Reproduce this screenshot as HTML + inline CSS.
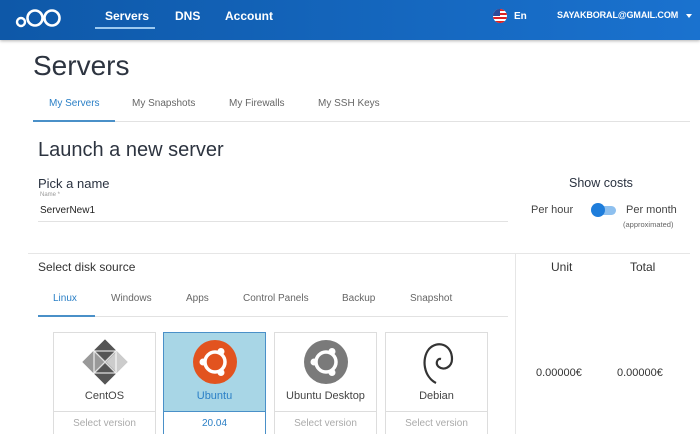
<!DOCTYPE html>
<html><head><meta charset="utf-8"><style>
*{margin:0;padding:0;box-sizing:border-box}
html,body{width:700px;height:434px;overflow:hidden}
body{background:#fff;font-family:"Liberation Sans",sans-serif;color:#2a3240;position:relative}
.a{position:absolute;white-space:nowrap}
.hdr{position:absolute;left:0;top:0;width:700px;height:40px;background:linear-gradient(90deg,#0e58a8,#1a72cf);box-shadow:0 1px 3px rgba(0,0,0,.3)}
.nav{color:#fff;font-weight:bold;font-size:12px;top:9px}
.tab{font-size:10px;color:#666}
.card{position:absolute;top:332px;width:103px;height:110px;border:1px solid #ddd;background:#fff}
.card .lb{position:absolute;top:57px;width:100%;text-align:center;font-size:11px;color:#444}
.card .dv{position:absolute;top:78px;width:100%;border-top:1px solid #ddd}
.card .vs{position:absolute;top:85px;width:100%;text-align:center;font-size:10px;color:#aaa}
.card svg{position:absolute;left:28px;top:6px}
</style></head><body>
<div class="hdr"></div>
<svg class="a" style="left:14px;top:5px" width="48" height="26" viewBox="0 0 48 26"><circle cx="7" cy="17" r="4" fill="none" stroke="#fff" stroke-width="2.4"/><circle cx="21" cy="13" r="7.5" fill="none" stroke="#fff" stroke-width="2.6"/><circle cx="38" cy="13" r="7.5" fill="none" stroke="#fff" stroke-width="2.6"/></svg>
<div class="a nav" style="left:105px">Servers</div>
<div class="a" style="left:95px;top:27px;width:60px;height:2px;background:#9cc9f0"></div>
<div class="a nav" style="left:175px">DNS</div>
<div class="a nav" style="left:225px">Account</div>
<svg class="a" style="left:493px;top:9px" width="14" height="14" viewBox="0 0 14 14"><clipPath id="c"><circle cx="7" cy="7" r="7"/></clipPath><g clip-path="url(#c)"><rect width="14" height="14" fill="#fff"/><rect y="0" width="14" height="2" fill="#d22"/><rect y="4" width="14" height="2" fill="#d22"/><rect y="8" width="14" height="2" fill="#d22"/><rect y="12" width="14" height="2" fill="#d22"/><rect width="7" height="7" fill="#2a4a9a"/></g></svg>
<div class="a nav" style="left:514px;top:11px;font-size:10px">En</div>
<div class="a nav" style="left:557px;top:10px;font-size:9px;letter-spacing:-0.1px">SAYAKBORAL@GMAIL.COM</div>
<div class="a" style="left:686px;top:14px;border:3.5px solid transparent;border-top:4px solid #fff"></div>

<div class="a" style="left:33px;top:50px;font-size:28px;color:#2d3440">Servers</div>
<div class="a tab" style="left:49px;top:98px;color:#2a7fc6">My Servers</div>
<div class="a tab" style="left:132px;top:98px">My Snapshots</div>
<div class="a tab" style="left:229px;top:98px">My Firewalls</div>
<div class="a tab" style="left:318px;top:98px">My SSH Keys</div>
<div class="a" style="left:33px;top:121px;width:657px;border-top:1px solid #e2e2e2"></div>
<div class="a" style="left:33px;top:120px;width:82px;height:2px;background:#4a90c8"></div>

<div class="a" style="left:38px;top:139px;font-size:20px;color:#2d3440">Launch a new server</div>
<div class="a" style="left:38px;top:176px;font-size:13px">Pick a name</div>
<div class="a" style="left:40px;top:192px;font-size:6px;color:#999">Name *</div>
<div class="a" style="left:40px;top:205px;font-size:10px;color:#222">ServerNew1</div>
<div class="a" style="left:38px;top:221px;width:470px;border-top:1px solid #e2e2e2"></div>

<div class="a" style="left:569px;top:176px;font-size:12.5px">Show costs</div>
<div class="a" style="left:531px;top:204px;font-size:11px;color:#444">Per hour</div>
<div class="a" style="left:594px;top:206px;width:22px;height:9px;border-radius:5px;background:#8ec0ef"></div>
<div class="a" style="left:591px;top:203px;width:14px;height:14px;border-radius:7px;background:#1e7ddb"></div>
<div class="a" style="left:626px;top:204px;font-size:11px;color:#444">Per month</div>
<div class="a" style="left:623px;top:220px;font-size:7.5px;color:#666">(approximated)</div>

<div class="a" style="left:28px;top:253px;width:662px;border-top:1px solid #e6e6e6"></div>
<div class="a" style="left:515px;top:253px;height:181px;border-left:1px solid #e6e6e6"></div>
<div class="a" style="left:38px;top:260px;font-size:12px;color:#333">Select disk source</div>
<div class="a" style="left:551px;top:260px;font-size:12px;color:#333">Unit</div>
<div class="a" style="left:630px;top:260px;font-size:12px;color:#333">Total</div>
<div class="a tab" style="left:53px;top:293px;color:#2a7fc6">Linux</div>
<div class="a tab" style="left:111px;top:293px">Windows</div>
<div class="a tab" style="left:186px;top:293px">Apps</div>
<div class="a tab" style="left:243px;top:293px">Control Panels</div>
<div class="a tab" style="left:342px;top:293px">Backup</div>
<div class="a tab" style="left:410px;top:293px">Snapshot</div>
<div class="a" style="left:38px;top:316px;width:470px;border-top:1px solid #e2e2e2"></div>
<div class="a" style="left:38px;top:315px;width:57px;height:2px;background:#4a90c8"></div>
<div class="a" style="left:536px;top:367px;font-size:11px;color:#333">0.00000€</div>
<div class="a" style="left:617px;top:367px;font-size:11px;color:#333">0.00000€</div>

<div class="card" style="left:53px"><svg width="46" height="46" viewBox="0 0 46 46"><g transform="rotate(45 23 23)"><rect x="7" y="7" width="32" height="32" fill="#aaa"/><rect x="7" y="7" width="15" height="15" fill="#555"/><rect x="24" y="24" width="15" height="15" fill="#555"/><rect x="24" y="7" width="15" height="15" fill="#ccc"/><rect x="7" y="24" width="15" height="15" fill="#999"/></g><rect x="12" y="12" width="22" height="22" fill="none" stroke="#fff" stroke-width="1"/><path d="M12 12L34 34M34 12L12 34" stroke="#eee" stroke-width="0.8"/></svg><div class="lb">CentOS</div><div class="dv"></div><div class="vs">Select version</div></div>
<div class="card" style="left:163px;border-color:#4a90c8;background:#a8d6e6"><svg width="46" height="46" viewBox="0 0 46 46"><circle cx="23" cy="23" r="22" fill="#e2531f"/><circle cx="23" cy="23" r="10" fill="none" stroke="#fff" stroke-width="3.5"/><circle cx="11" cy="23" r="3.5" fill="#fff"/><circle cx="29" cy="12.5" r="3.5" fill="#fff"/><circle cx="29" cy="33.5" r="3.5" fill="#fff"/></svg><div class="lb" style="color:#2a7fc6">Ubuntu</div><div class="dv" style="border-color:#4a90c8"></div><div class="vs" style="background:#fff;top:79px;height:40px;padding-top:6px;color:#2a7fc6">20.04</div></div>
<div class="card" style="left:274px"><svg width="46" height="46" viewBox="0 0 46 46"><circle cx="23" cy="23" r="22" fill="#7a7a7a"/><circle cx="23" cy="23" r="10" fill="none" stroke="#fff" stroke-width="3.5"/><circle cx="11" cy="23" r="3.5" fill="#fff"/><circle cx="29" cy="12.5" r="3.5" fill="#fff"/><circle cx="29" cy="33.5" r="3.5" fill="#fff"/></svg><div class="lb">Ubuntu Desktop</div><div class="dv"></div><div class="vs">Select version</div></div>
<div class="card" style="left:385px"><svg width="46" height="46" viewBox="0 0 46 46"><path d="M22 44 C10 38 7 20 15 10 C23 1 38 5 38 20 C38 28 30 32 25 28 C21 25 23 19 27 20" fill="none" stroke="#333" stroke-width="2.2"/></svg><div class="lb">Debian</div><div class="dv"></div><div class="vs">Select version</div></div>
</body></html>
